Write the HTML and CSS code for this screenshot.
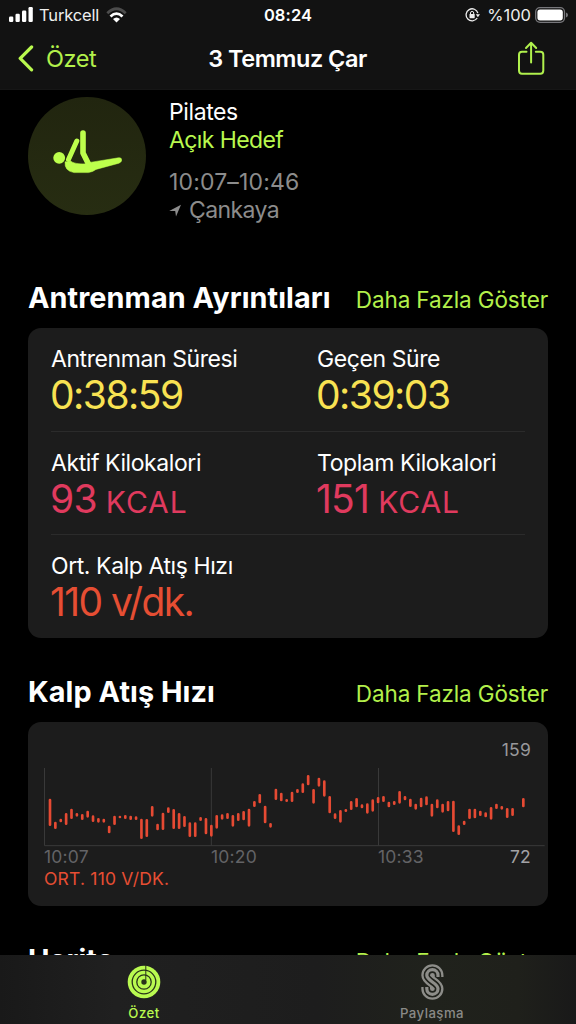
FILE: index.html
```html
<!DOCTYPE html>
<html lang="tr">
<head>
    <meta charset="UTF-8">
    <meta name="viewport" content="width=device-width, initial-scale=1.0">
    <title>Antrenman</title>
    <link rel="stylesheet" href="styles.css">
</head>
<body>
    <header class="topbar">
        <div class="status">
            <div class="status-left">
                <svg class="signal" width="24" height="15" viewBox="0 0 24 15">
                    <rect x="0" y="9.5" width="4.3" height="5.5" rx="1.2"/>
                    <rect x="6.5" y="6.8" width="4.3" height="8.2" rx="1.2"/>
                    <rect x="13" y="3.5" width="4.3" height="11.5" rx="1.2"/>
                    <rect x="19.5" y="0" width="4.3" height="15" rx="1.2"/>
                </svg>
                <span class="carrier">Turkcell</span>
                <svg class="wifi" width="21" height="16" viewBox="0 0 21 16">
                    <path d="M1.3 6.2Q10.5 -2.8 19.7 6.2" fill="none" stroke="#4c4c4c" stroke-width="2.8"/>
                    <path d="M4.5 9.4Q10.5 3.8 16.5 9.4" fill="none" stroke="#fff" stroke-width="2.8"/>
                    <path d="M7 12Q10.5 8.8 14 12L10.5 15.6Z" fill="#fff"/>
                </svg>
            </div>
            <span class="clock">08:24</span>
            <div class="status-right">
                <svg class="lock" width="15" height="14" viewBox="0 0 15 14">
                    <path d="M12.2 10A6 6 0 1 1 12.9 5.2" fill="none" stroke="#eee" stroke-width="1.3"/>
                    <path d="M10.8 6.2H15L12.9 9.2Z" fill="#eee"/>
                    <rect x="4.5" y="6" width="5.2" height="4.2" rx=".6" fill="#eee"/>
                    <path d="M5.5 6.2V5a1.6 1.6 0 0 1 3.2 0V6.2" fill="none" stroke="#eee" stroke-width="1"/>
                </svg>
                <span class="percent">%100</span>
                <svg class="battery" width="34" height="16" viewBox="0 0 34 16">
                    <rect x=".7" y=".7" width="28.8" height="14.6" rx="4.2" fill="none" stroke="#77777b" stroke-width="1.3"/>
                    <rect x="2.4" y="2.6" width="25.4" height="10.8" rx="2.6" fill="#fff"/>
                    <path d="M31 5.4Q33 6.3 33 8T31 10.6Z" fill="#77777b"/>
                </svg>
            </div>
        </div>
        <nav class="navbar">
            <a href="#" class="back">
                <svg width="18" height="27" viewBox="0 0 18 27">
                    <path d="M15.6 2L4.2 13.4L15.6 24.8" fill="none" stroke="#b9f94e" stroke-width="3.2" stroke-linecap="round" stroke-linejoin="round"/>
                </svg>
                <span>Özet</span>
            </a>
            <h1 class="title">3 Temmuz Çar</h1>
            <a href="#" class="share">
                <svg width="28" height="35" viewBox="0 0 28 35" fill="none" stroke="#b0f04d" stroke-width="2" stroke-linecap="round" stroke-linejoin="round">
                    <path d="M9.5 10.8H5Q2 10.8 2 13.8V29.5Q2 32.7 5 32.7H23.3Q26.3 32.7 26.3 29.5V13.8Q26.3 10.8 23.3 10.8H18.8"/>
                    <path d="M14.1 21.5V2M9 7L14.1 1.8L19.2 7"/>
                </svg>
            </a>
        </nav>
    </header>

    <main class="content">
        <section class="summary">
            <div class="activity">
                <svg width="118" height="118" viewBox="0 0 118 118" fill="none" stroke="#bdff4c" stroke-linecap="round" stroke-linejoin="round">
                    <circle cx="31.2" cy="60.8" r="5.9" fill="#bdff4c" stroke="none"/>
                    <path d="M48.8 44L40.5 62.5" stroke-width="5"/>
                    <path d="M55 36V56L61 68" stroke-width="5.6"/>
                    <path d="M37 65Q36.2 74 46 75.6H60.5Q65 74.8 68 72.4L91 66.2Q94.8 64.6 93.3 61.6Q92.4 60.4 90.4 60.8L62 65.4L58.5 66.8Q46 67.4 42.5 64Z" fill="#bdff4c" stroke-width=".5"/>
                </svg>
            </div>
            <div class="summary-text">
                <p class="name">Pilates</p>
                <p class="goal">Açık Hedef</p>
                <p class="time">10:07–10:46</p>
                <p class="place">
                    <svg width="12" height="13" viewBox="0 0 12 13"><path d="M12 .8L7 12.5L6.2 7H.2Z" fill="#8c8c8c"/></svg>
                    <span>Çankaya</span>
                </p>
            </div>
        </section>

        <section class="section details">
            <div class="section-head">
                <h2>Antrenman Ayrıntıları</h2>
                <a href="#" class="more">Daha Fazla Göster</a>
            </div>
            <div class="card metrics">
                <div class="row">
                    <div class="metric">
                        <p class="label">Antrenman Süresi</p>
                        <p class="value yellow">0:38:59</p>
                    </div>
                    <div class="metric">
                        <p class="label">Geçen Süre</p>
                        <p class="value yellow">0:39:03</p>
                    </div>
                </div>
                <div class="row">
                    <div class="metric">
                        <p class="label">Aktif Kilokalori</p>
                        <p class="value pink">93 <span class="unit">KCAL</span></p>
                    </div>
                    <div class="metric">
                        <p class="label">Toplam Kilokalori</p>
                        <p class="value pink">151 <span class="unit">KCAL</span></p>
                    </div>
                </div>
                <div class="row">
                    <div class="metric">
                        <p class="label">Ort. Kalp Atış Hızı</p>
                        <p class="value orange">110 v/dk.</p>
                    </div>
                </div>
            </div>
        </section>

        <section class="section heart">
            <div class="section-head">
                <h2>Kalp Atış Hızı</h2>
                <a href="#" class="more">Daha Fazla Göster</a>
            </div>
            <div class="card chart">
                <p class="max">159</p>
                <svg class="plot" width="520" height="79" viewBox="0 84 1560 237">
                    <path class="grid" d="M49.5 84V317M550 84V317M1051.5 84V317M49.5 317H1550"/>
                    <path class="bars" id="bars"/>
                </svg>
                <div class="axis">
                    <span>10:07</span>
                    <span>10:20</span>
                    <span>10:33</span>
                    <span class="min">72</span>
                </div>
                <p class="average">ORT. 110 V/DK.</p>
            </div>
        </section>

        <section class="section map">
            <div class="section-head">
                <h2>Harita</h2>
                <a href="#" class="more">Daha Fazla Göster</a>
            </div>
        </section>
    </main>

    <footer class="tabbar">
        <a href="#" class="tab active">
            <svg width="34" height="36" viewBox="0 0 34 36" fill="none">
                <circle cx="17" cy="18" r="16.3" fill="#b9fa50"/>
                <circle cx="17" cy="18" r="11.8" stroke="#28331a" stroke-width="1.3"/>
                <circle cx="17" cy="18" r="7.2" stroke="#28331a" stroke-width="1.3"/>
                <circle cx="17" cy="18" r="2.7" fill="#28331a"/>
                <path d="M18.8 1.5V16" stroke="#28331a" stroke-width="1"/>
            </svg>
            <span>Özet</span>
        </a>
        <a href="#" class="tab">
            <svg width="23" height="36" viewBox="0 0 23 36" fill="none">
                <path d="M17 13V11.3A5.6 5.6 0 0 0 5.8 11.3C5.8 17 17 19 17 24.7A5.6 5.6 0 0 1 5.8 24.7V23" stroke="#8d8d89" stroke-width="11"/>
                <path d="M17 13V11.3A5.6 5.6 0 0 0 5.8 11.3C5.8 17 17 19 17 24.7A5.6 5.6 0 0 1 5.8 24.7V23" stroke="#20221c" stroke-width="6.4"/>
                <path d="M17 13V11.3A5.6 5.6 0 0 0 5.8 11.3C5.8 17 17 19 17 24.7A5.6 5.6 0 0 1 5.8 24.7V23" stroke="#8d8d89" stroke-width="3.2"/>
            </svg>
            <span>Paylaşma</span>
        </a>
    </footer>

    <script src="script.js"></script>
</body>
</html>
```
FILE: styles.css
```css
/* Reset and base styles */
* {
    margin: 0;
    padding: 0;
    box-sizing: border-box;
}

body {
    display: flex;
    flex-direction: column;
    width: 576px;
    height: 1024px;
    overflow: hidden;
    background-color: #000;
    color: #fff;
    font-family: Inter, "Liberation Sans", sans-serif;
}

a {
    color: #b3f04b;
    text-decoration: none;
}

svg {
    display: block;
    flex: none;
}

p,
span {
    white-space: nowrap;
}

/* Top bar */
.topbar {
    flex: none;
    height: 90px;
    background-color: #121212;
    border-bottom: 1px solid #161616;
}

.status {
    display: grid;
    grid-template-columns: 1fr auto 1fr;
    align-items: center;
    height: 29px;
    padding: 0 7px 0 9px;
    font-size: 16.5px;
}

.status-left,
.status-right {
    display: flex;
    align-items: center;
}

.status-right {
    justify-content: flex-end;
}

.signal {
    fill: #fff;
    margin-top: -1px;
}

.carrier {
    margin-left: 6px;
    color: #eee;
    letter-spacing: -0.15px;
}

.wifi {
    margin-left: 7px;
}

.clock {
    margin-left: -2px;
    font-weight: 600;
    letter-spacing: 0.1px;
}

.percent {
    margin: 0 4px 0 7px;
    color: #eee;
}

.navbar {
    display: grid;
    grid-template-columns: 1fr auto 1fr;
    align-items: center;
    height: 59px;
    padding: 0 17px 0 16px;
}

.back {
    display: flex;
    align-items: center;
    gap: 12px;
    font-size: 23.5px;
    letter-spacing: -0.4px;
}

.title {
    font-size: 23.5px;
    font-weight: 600;
    letter-spacing: -0.5px;
}

.share {
    justify-self: end;
    margin-right: 14px;
}

/* Page content */
.content {
    flex: 1;
    min-height: 0;
    padding: 7px 28px 0;
    overflow: hidden;
}

.summary {
    display: flex;
    gap: 23px;
    height: 118px;
}

.activity {
    width: 118px;
    height: 118px;
    border-radius: 50%;
    background: linear-gradient(#21250f, #272d12);
}

.summary-text {
    padding-top: 1px;
    font-size: 23px;
    line-height: 28px;
    letter-spacing: -0.4px;
}

.goal {
    color: #b9f84e;
    letter-spacing: -0.6px;
}

.time {
    margin-top: 14px;
    color: #8c8c8c;
    letter-spacing: 0.15px;
}

.place {
    display: flex;
    align-items: center;
    gap: 8px;
    color: #8c8c8c;
}

.place span {
    letter-spacing: -0.6px;
}

.section {
    margin-top: 35px;
}

.details {
    margin-top: 64px;
}

.section-head {
    display: flex;
    justify-content: space-between;
    align-items: baseline;
    height: 36px;
    margin-bottom: 13px;
    line-height: 37px;
    white-space: nowrap;
}

.section-head h2 {
    font-size: 28.8px;
    font-weight: 700;
    letter-spacing: 0.08px;
}

.more {
    font-size: 22.5px;
    letter-spacing: -0.12px;
}

.card {
    border-radius: 13px;
    background-color: #1c1c1c;
}

/* Workout metrics */
.metrics {
    height: 310px;
    padding: 0 23px;
}

.row {
    display: grid;
    grid-template-columns: 266px 1fr;
    height: 103.5px;
    padding-top: 17px;
    border-bottom: 1px solid #2b2b2b;
}

.row:last-child {
    border-bottom: none;
}

.label {
    font-size: 23px;
    line-height: 28px;
    letter-spacing: -0.42px;
}

.value {
    margin-left: -1px;
    font-size: 39px;
    line-height: 44px;
}

.unit {
    margin-left: -1px;
    font-size: 30px;
    letter-spacing: 0.9px;
}

.yellow {
    color: #f8e252;
    letter-spacing: -1.5px;
}

.pink {
    color: #e03a5e;
    letter-spacing: -0.8px;
}

.orange {
    color: #e64e33;
    letter-spacing: -1.6px;
}

/* Heart rate chart */
.chart {
    height: 184px;
    padding-top: 17px;
    font-size: 17.5px;
    line-height: 22px;
    letter-spacing: 0.2px;
}

.max {
    padding-right: 17px;
    color: #98989b;
    text-align: right;
}

.plot {
    margin-top: 7px;
}

.grid {
    fill: none;
    stroke: #393939;
    stroke-width: 3;
}

.bars {
    fill: none;
    stroke: #e64a33;
    stroke-width: 8;
    stroke-linecap: round;
}

.axis {
    display: grid;
    grid-template-columns: 167px 167px 1fr auto;
    margin-top: -1px;
    padding: 0 17px 0 16px;
    color: #636366;
}

.axis .min {
    color: #a2a2a5;
}

.average {
    padding-left: 16px;
    color: #e64e33;
}

/* Section partly under the tab bar */
.map {
    margin-top: 34.5px;
}

/* Bottom tabs */
.tabbar {
    display: flex;
    flex: none;
    height: 69px;
    background: linear-gradient(90deg, #191919, #202020 20%, #1d1d1d 55%, #20221c 75%, #1f201b 90%, #191919);
}

.tab {
    display: flex;
    flex: 1;
    flex-direction: column;
    align-items: center;
    padding-top: 9px;
    color: #8a8a87;
    font-size: 13.2px;
    font-weight: 500;
    line-height: 16px;
    letter-spacing: 0.45px;
}

.tab span {
    margin-top: 5px;
}

.tab.active {
    color: #b9f84e;
}
```
FILE: script.js
```js
// [high, low] per bar, null where there is no reading
const readings = [
    [176, 258], [245, 267], [236, 247], [219, 255], [206, 237], [219, 230], [222, 240], [212, 233],
    [226, 246], [234, 248], [236, 248], [257, 280], [227, 255], [227, 235], [225, 237], [227, 240],
    [229, 240], [236, 297], [237, 291], [198, 230], [251, 271], [218, 270], [202, 219], [207, 267],
    [219, 267], [228, 261], [247, 291], [247, 291], [231, 243], [234, 283], [254, 290], [225, 266],
    [223, 239], [219, 237], [225, 260], [219, 243], [213, 241], [206, 260], [183, 201], [162, 190],
    [197, 250], [249, 263], [146, 180], [158, 184], [177, 186], [155, 186], [147, 159], [130, 159],
    [105, 136], [147, 191], [113, 140], [121, 170], [168, 220], [220, 237], [210, 248], [207, 216],
    [183, 210], [174, 202], [193, 205], [190, 221], [178, 215], [171, 190], [168, 186], [185, 202],
    [183, 195], [153, 191], [168, 181], [176, 201], [191, 209], [173, 202], [169, 196], [191, 230],
    [178, 205], [191, 218], [183, 214], [182, 276], [256, 285], [242, 255], [206, 237], [206, 235],
    [212, 228], [217, 232], [201, 239], [191, 207], [198, 209], [204, 234], [204, 228], null,
    [174, 202]
];

let d = '';
readings.forEach((r, i) => {
    if (r) {
        d += `M${(66 + i * 16.136).toFixed(1)} ${r[0] + 4}V${r[1] - 4}`;
    }
});
document.getElementById('bars').setAttribute('d', d);
```
